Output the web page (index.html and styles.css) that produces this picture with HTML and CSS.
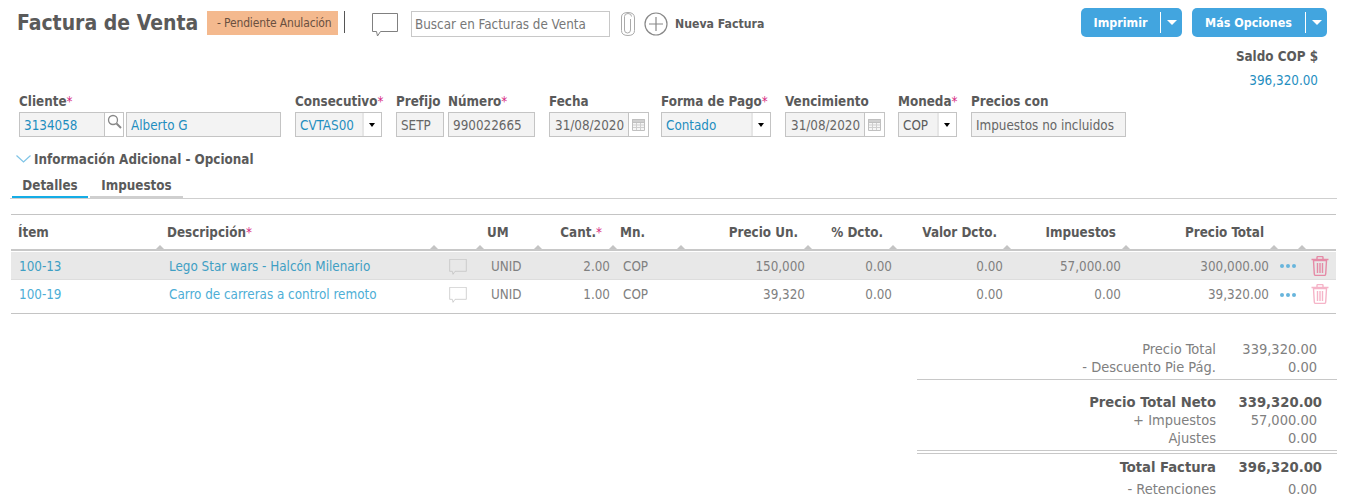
FILE: index.html
```html
<!DOCTYPE html>
<html lang="es">
<head>
<meta charset="utf-8">
<title>Factura de Venta</title>
<link rel="stylesheet" href="styles.css">
</head>
<body>
<svg class="defs" width="0" height="0" aria-hidden="true">
  <symbol id="bubble" viewBox="0 0 26 24"><path d="M.5.5h25v18H8.500l-3 4.500-1-4.500H.5z" fill="none" stroke="currentColor"/></symbol>
  <symbol id="cal" viewBox="0 0 13 12"><path d="M.5.5h12v11H.5z" fill="#f6f6f6" stroke="#c0c0c0"/><path d="M.5.5h12v3H.5z" fill="#cfcfcf" stroke="#c0c0c0"/><path d="M1 6h11M1 8.500h11M4.500 4v7M8.500 4v7" stroke="#cfcfcf" fill="none"/></symbol>
  <symbol id="trash" viewBox="0 0 18 20"><path d="M2.500 4.500h13l-.8 13.500q-.1 1.500-1.700 1.500H5q-1.600 0-1.700-1.500zM.5 3.500h17M6 3.500V1.500q0-1 1-1h4q1 0 1 1v2M6.500 7v10M9 7v10M11.500 7v10" fill="none" stroke="currentColor" stroke-width="1.400"/></symbol>
</svg>

<header class="top">
  <h1 class="title">Factura de Venta</h1>
  <span class="badge">- Pendiente Anulación</span>
  <span class="divider"></span>
  <svg class="bubble-lg"><use href="#bubble"/></svg>
  <input class="search" placeholder="Buscar en Facturas de Venta">
  <svg class="clip" viewBox="0 0 16 24"><path d="M11 7v11q0 3-3 3t-3-3V4.500q0-3 3.500-3t3.500 3" transform="translate(-.5 0)" fill="none" stroke="#aaa"/><path d="M14.500 6v12.500q0 5-6.500 5t-6.500-5V5Q1.500.5 8 .5t6.500 5.500" fill="none" stroke="#aaa"/></svg>
  <svg class="plus" viewBox="0 0 24 24"><circle cx="12" cy="12" r="11" fill="none" stroke="#888" stroke-width="1.200"/><path d="M12 5v14M5 12h14" stroke="#888" stroke-width="1.200"/></svg>
  <span class="new">Nueva Factura</span>
  <div class="actions">
    <div class="btn btn-print"><span class="btn-label">Imprimir</span><span class="btn-caret"></span></div>
    <div class="btn btn-more"><span class="btn-label">Más Opciones</span><span class="btn-caret"></span></div>
  </div>
</header>

<div class="saldo">
  <b>Saldo COP $</b>
  <span>396,320.00</span>
</div>

<section class="form">
  <div class="field f-cliente">
    <label>Cliente<i>*</i></label>
    <div class="ctl-row">
      <div class="box link w-code">3134058</div>
      <div class="box-btn">
        <svg width="15" height="15" viewBox="0 0 15 15"><circle cx="6" cy="6" r="4.500" fill="none" stroke="#888" stroke-width="1.300"/><path d="M9.500 9.500l4.500 4.500" stroke="#888" stroke-width="2"/></svg>
      </div>
      <div class="box link grow name">Alberto G</div>
    </div>
  </div>
  <div class="field f-cons">
    <label>Consecutivo<i>*</i></label>
    <div class="select link"><span>CVTAS00</span><em></em></div>
  </div>
  <div class="field f-pre">
    <label>Prefijo</label>
    <div class="box">SETP</div>
  </div>
  <div class="field f-num">
    <label>Número<i>*</i></label>
    <div class="box">990022665</div>
  </div>
  <div class="field f-fecha">
    <label>Fecha</label>
    <div class="date"><span>31/08/2020</span><svg width="13" height="12"><use href="#cal"/></svg></div>
  </div>
  <div class="field f-pago">
    <label>Forma de Pago<i>*</i></label>
    <div class="select link"><span>Contado</span><em></em></div>
  </div>
  <div class="field f-venc">
    <label>Vencimiento</label>
    <div class="date"><span>31/08/2020</span><svg width="13" height="12"><use href="#cal"/></svg></div>
  </div>
  <div class="field f-mon">
    <label>Moneda<i>*</i></label>
    <div class="select"><span>COP</span><em></em></div>
  </div>
  <div class="field f-prec">
    <label>Precios con</label>
    <div class="box">Impuestos no incluidos</div>
  </div>
</section>

<div class="more-info">
  <svg width="15" height="8" viewBox="0 0 15 8"><path d="M.5.500l7 6.500 7-6.500" fill="none" stroke="#7fc4e6" stroke-width="1.200"/></svg>
  <b>Información Adicional - Opcional</b>
</div>

<nav class="tabs">
  <span class="tab active">Detalles</span>
  <span class="tab">Impuestos</span>
</nav>

<section class="grid">
  <div class="row head">
    <div class="h tri">Ítem</div>
    <div class="h tri">Descripción<i>*</i></div>
    <div class="h tri"></div>
    <div class="h tri">UM</div>
    <div class="h tri r c-cant">Cant.<i>*</i></div>
    <div class="h tri">Mn.</div>
    <div class="h tri r">Precio Un.</div>
    <div class="h tri r">% Dcto.</div>
    <div class="h tri r">Valor Dcto.</div>
    <div class="h tri r">Impuestos</div>
    <div class="h tri r">Precio Total</div>
    <div class="h tri"></div>
    <div class="h"></div>
  </div>
  <div class="row item odd">
    <div class="c link">100-13</div>
    <div class="c link">Lego Star wars - Halcón Milenario</div>
    <div class="c ic"><svg class="bubble-sm"><use href="#bubble"/></svg></div>
    <div class="c um">UNID</div>
    <div class="c n">2.00</div>
    <div class="c mn">COP</div>
    <div class="c n">150,000</div>
    <div class="c n">0.00</div>
    <div class="c n">0.00</div>
    <div class="c n">57,000.00</div>
    <div class="c n">300,000.00</div>
    <div class="c dots"><u></u><u></u><u></u></div>
    <div class="c bin"><svg width="18" height="20"><use href="#trash"/></svg></div>
  </div>
  <div class="row item">
    <div class="c link">100-19</div>
    <div class="c link">Carro de carreras a control remoto</div>
    <div class="c ic"><svg class="bubble-sm"><use href="#bubble"/></svg></div>
    <div class="c um">UNID</div>
    <div class="c n">1.00</div>
    <div class="c mn">COP</div>
    <div class="c n">39,320</div>
    <div class="c n">0.00</div>
    <div class="c n">0.00</div>
    <div class="c n">0.00</div>
    <div class="c n">39,320.00</div>
    <div class="c dots"><u></u><u></u><u></u></div>
    <div class="c bin"><svg width="18" height="20"><use href="#trash"/></svg></div>
  </div>
</section>

<section class="totals">
  <div class="t-group g1">
    <div class="t"><span>Precio Total</span><span>339,320.00</span></div>
    <div class="t"><span>- Descuento Pie Pág.</span><span>0.00</span></div>
  </div>
  <div class="t-group g2">
    <div class="t big"><span>Precio Total Neto</span><span>339,320.00</span></div>
    <div class="t"><span>+ Impuestos</span><span>57,000.00</span></div>
    <div class="t"><span>Ajustes</span><span>0.00</span></div>
  </div>
  <div class="t-group g3">
    <div class="t big"><span>Total Factura</span><span>396,320.00</span></div>
    <div class="t ret"><span>- Retenciones</span><span>0.00</span></div>
  </div>
</section>
</body>
</html>
```

FILE: styles.css
```css
* { box-sizing: border-box; }
html, body { margin: 0; padding: 0; }
body {
  width: 1355px;
  height: 501px;
  overflow: hidden;
  background: #fff;
  color: #5c5c5c;
  font-family: "DejaVu Sans", "Liberation Sans", sans-serif;
  font-stretch: condensed;
  font-size: 13.33px;
}
.defs { position: absolute; }
i { font-style: normal; color: #d6287f; font-weight: 400; }

.top { display: flex; align-items: flex-start; height: 46px; padding: 8px 28px 0 17px; }
.title { margin: 1px 8px 0 0; font-size: 21px; line-height: 28px; font-weight: 700; color: #5a5a5a; width: 182px; white-space: nowrap; }
.badge { margin-top: 3px; width: 131px; height: 24px; line-height: 25px; background: #f4b98e; color: #6a5040; padding-left: 10px; font-size: 12px; letter-spacing: -.15px; white-space: nowrap; }
.divider { margin: 3px 0 0 6px; width: 1px; height: 22px; background: #555; }
.bubble-lg { margin: 5px 0 0 27px; width: 26px; height: 24px; color: #808080; }
.search { margin: 3px 0 0 13px; width: 199px; height: 26px; padding: 0 3px; border: 1px solid #c8c8c8; font: inherit; font-stretch: condensed; outline: 0; }
.search::placeholder { color: #777; opacity: 1; }
.clip { margin: 4px 0 0 10px; width: 16px; height: 24px; }
.plus { margin: 4px 0 0 8px; width: 24px; height: 24px; }
.new { margin: 9px 0 0 7px; font-size: 12.2px; font-weight: 700; white-space: nowrap; }
.actions { display: flex; gap: 10px; margin-left: auto; }
.btn { display: flex; align-items: center; height: 29px; background: #42a5df; border-radius: 5px; color: #fff; font-weight: 700; font-size: 12.4px; }
.btn-print { width: 101px; }
.btn-more { width: 135px; }
.btn-label { flex: 1; text-align: center; }
.btn-caret { position: relative; width: 22px; height: 21px; border-left: 1px solid #fff; }
.btn-caret::after { content: ""; position: absolute; left: 6px; top: 8px; border: 5px solid transparent; border-top-color: #fff; border-bottom: 0; }

.saldo { display: flex; flex-direction: column; align-items: flex-end; gap: 9px; padding-right: 37px; line-height: 15px; height: 45px; margin-top: 3px; }
.saldo b { color: #5a5a5a; }
.saldo span { color: #1f8ebf; }

.form { display: flex; padding-left: 19px; }
.field { flex: none; }
.field label { display: block; height: 18px; line-height: 15px; font-weight: 700; color: #5a5a5a; white-space: nowrap; }
.f-cliente { width: 262px; margin-right: 14px; }
.f-cons { width: 87px; margin-right: 14px; }
.f-pre { width: 48px; margin-right: 4px; }
.f-num { width: 87px; margin-right: 14px; }
.f-fecha { width: 100px; margin-right: 12px; }
.f-pago { width: 110px; margin-right: 14px; }
.f-venc { width: 100px; margin-right: 13px; }
.f-mon { width: 59px; margin-right: 14px; }
.f-prec { width: 155px; }

.ctl-row { display: flex; }
.box { height: 25px; line-height: 25px; padding: 0 4px; background: #f3f3f3; border: 1px solid #c4c4c4; color: #666; white-space: nowrap; }
.link { color: #1f8ebf; }
.box.link { color: #1f8ebf; }
.w-code { width: 86px; }
.box-btn { width: 20px; height: 25px; margin-left: -1px; border: 1px solid #c4c4c4; display: flex; justify-content: center; padding-top: 1px; flex: none; }
.grow { flex: 1; }
.name { margin-left: 2px; }
.select { display: flex; height: 25px; border: 1px solid #c4c4c4; line-height: 25px; }
.select span { flex: 1; background: #f3f3f3; padding-left: 4px; border-right: 2px solid #e6e6e6; white-space: nowrap; }
.select em { position: relative; width: 17px; flex: none; }
.select em::after { content: ""; position: absolute; left: 5px; top: 10px; border: 3.500px solid transparent; border-top: 4px solid #000; border-bottom: 0; }
.date { display: flex; height: 25px; border: 1px solid #c4c4c4; line-height: 25px; align-items: center; }
.date span { flex: 1; background: #f3f3f3; padding-left: 5px; height: 100%; border-right: 1px solid #c4c4c4; color: #666; white-space: nowrap; }
.date svg { margin: 0 3px; flex: none; }

.more-info { display: flex; align-items: center; gap: 3px; margin: 14px 0 0 16px; height: 16px; }
.more-info b { color: #5a5a5a; }

.tabs { display: flex; gap: 2px; margin: 8px 0 0 10px; padding-left: 2px; width: 1327px; height: 23px; box-shadow: 0 1px 0 #cfcfcf; }
.tab { width: 93px; height: 23px; line-height: 22px; font-weight: 700; text-align: center; border-bottom: 2px solid #cfcfcf; color: #5a5a5a; }
.tab.active { width: 76px; border-bottom-color: #15ade6; }

.grid { width: 1325px; margin: 16px 0 0 11px; border-top: 1px solid #c4c4c4; border-bottom: 1px solid #c4c4c4; }
.row { display: grid; grid-template-columns: 149px 274px 46px 58px 75px 68px 127px 85px 114px 119px 148px 28px 34px; }
.head { height: 36px; border-bottom: 2px solid #c8c8c8; }
.h { position: relative; padding: 10px 0 0 7px; font-weight: 700; color: #5a5a5a; white-space: nowrap; line-height: 15px; }
.h.r { text-align: right; padding: 10px 10px 0 0; }
.h.c-cant { padding-right: 11px; }
.tri::after { content: ""; position: absolute; right: -4px; bottom: 0; border: 4px solid transparent; border-bottom-color: #c4c4c4; border-top: 0; }
.item { height: 27px; line-height: 29px; color: #808080; }
.item + .item { height: 34px; line-height: 29px; border-top: 1px solid #ddd; }
.odd { margin-top: 1px; background: #e8e8e8; }
.c { padding-left: 8px; white-space: nowrap; }
.c:nth-child(2) { padding-left: 9px; }
.c.link { color: #4eaed6; }
.odd .c.link { color: #3f9fc4; }
.ic { padding: 7px 0 0 15px; line-height: 0; color: #bdbdbd; }
.bubble-sm { width: 18px; height: 16px; }
.um { padding-left: 11px; }
.mn { padding-left: 10px; }
.n { text-align: right; padding: 0 5px 0 0; }
.n:nth-child(5), .n:nth-child(7) { padding-right: 3px; }
.n:nth-child(8) { padding-right: 1px; }
.n:nth-child(9) { padding-right: 4px; }
.dots { display: flex; gap: 2px; padding: 12px 0 0 6px; line-height: 0; }
.dots u { width: 4px; height: 4px; border-radius: 50%; background: #68b5dc; }
.item + .item .dots { padding-top: 13px; }
.bin { padding: 4px 0 0 9px; line-height: 0; color: #e58aa6; }
.item + .item .bin { padding-top: 4px; color: #f5b4c8; }

.totals { width: 420px; margin: 26px 0 0 917px; color: #808080; font-size: 14.5px; }
.g1 { height: 40px; border-bottom: 1px solid #c8c8c8; }
.g2 { height: 71px; padding-top: 13px; border-bottom: 1px solid #c8c8c8; }
.g3 { border-top: 1px solid #c8c8c8; margin-top: 2px; padding-top: 4px; }
.t { display: grid; grid-template-columns: 299px 101px; line-height: 18px; text-align: right; white-space: nowrap; }
.big { color: #5a5a5a; font-weight: 700; font-size: 14.67px; grid-template-columns: 299px 106px; }
.ret { margin-top: 4px; }
```
